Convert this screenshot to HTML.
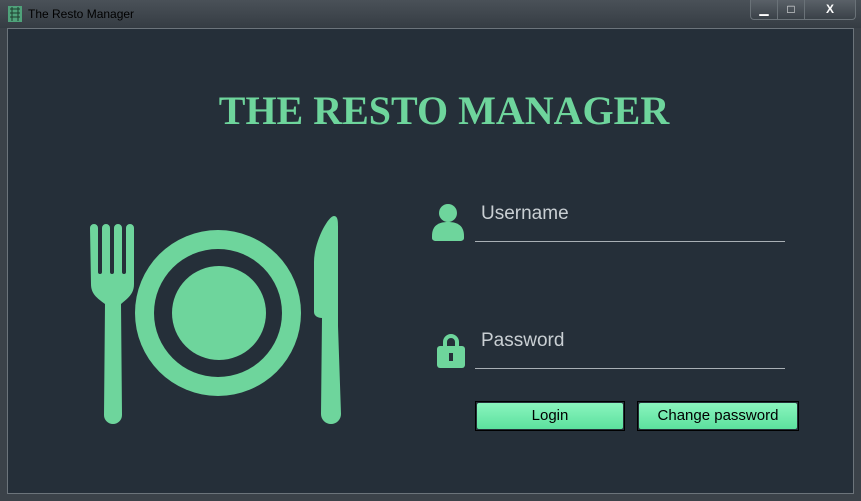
<!DOCTYPE html>
<html><head><meta charset="utf-8"><style>
body{margin:0;width:861px;height:501px;overflow:hidden;background:#3b4249;font-family:"Liberation Sans",sans-serif;position:relative}
.tb{position:absolute;left:0;top:0;width:861px;height:28px;background:linear-gradient(#4a5158,#353c43)}
.title{position:absolute;left:28px;top:7px;font-size:12px;color:#000}
.content{position:absolute;left:7px;top:28px;width:847px;height:466px;background:#252f39;border:1px solid #6c747b;box-sizing:border-box}
.h1{position:absolute;left:0;width:888px;top:87px;text-align:center;font-family:"Liberation Serif",serif;font-weight:bold;font-size:40px;color:#6ed59c}
.lbl{position:absolute;left:481px;font-size:19px;color:#c9cfd3}
.line{position:absolute;left:475px;width:310px;height:1px;background:#a9b0b5}
.btn{position:absolute;top:401px;height:30px;border:1px solid #000;box-sizing:border-box;padding:1px}
.btn div{height:100%;background:linear-gradient(#8af5be,#5ce09e);border-radius:2px;text-align:center;font-size:15px;line-height:26px;color:#000}
.wb{position:absolute;top:0;height:19px;border:1px solid #6a7278;border-top:none;background:linear-gradient(#5a6168,#3a4148);color:#fff;text-align:center;font-size:12px;line-height:18px}
</style></head><body>
<div class="tb"></div>
<svg style="position:absolute;left:8px;top:6px" width="14" height="16"><rect width="14" height="16" fill="#4fa27a"/><path d="M2 3h10M2 7h10M2 11h10M4 1v14M10 1v14" stroke="#1d3b2c" stroke-width="1"/></svg>
<div class="title">The Resto Manager</div>
<div class="wb" style="left:750px;width:26px;border-radius:0 0 0 4px">▁</div>
<div class="wb" style="left:777px;width:26px">□</div>
<div class="wb" style="left:804px;width:50px;border-radius:0 0 4px 0;font-weight:bold">X</div>
<div class="content"></div>
<div class="h1">THE RESTO MANAGER</div>
<svg style="position:absolute;left:0;top:0" width="861" height="501">
<g fill="#6ed59c">
<circle cx="218" cy="313" r="83"/><circle cx="218" cy="313" r="64" fill="#252f39"/><circle cx="219" cy="313" r="47"/>
<path d="M90 228a4 4 0 0 1 8 0v44a2 2 0 0 0 4 0v-44a4 4 0 0 1 8 0v44a2 2 0 0 0 4 0v-44a4 4 0 0 1 8 0v44a2 2 0 0 0 4 0v-44a4 4 0 0 1 8 0v56c0 10-6 14-13 20l1 111a8 8 0 0 1-18 0l1-111c-8-6-14-10-14-20z"/>
<path d="M334 216c4 0 4 6 4 10v100l3 88a8 8 0 0 1-20 0l1-96c-4 0-8-2-8-6v-50c0-20 14-46 20-46z"/>
<circle cx="448" cy="213" r="9"/><path d="M432 236c0-10 6-14 16-14s16 4 16 14v2c0 2-2 3-4 3h-24c-2 0-4-1-4-3z"/>
<path d="M443 347v-5a8 8 0 0 1 16 0v5h-4v-5a4 4 0 0 0-8 0v5z"/><rect x="437" y="346" width="28" height="22" rx="3"/>
</g>
<rect x="449" y="353" width="4" height="8" fill="#252f39"/>
</svg>
<div class="lbl" style="top:203px">Username</div><div class="line" style="top:241px"></div>
<div class="lbl" style="top:330px">Password</div><div class="line" style="top:368px"></div>
<div class="btn" style="left:475px;width:150px"><div>Login</div></div>
<div class="btn" style="left:637px;width:162px"><div>Change password</div></div>
</body></html>
